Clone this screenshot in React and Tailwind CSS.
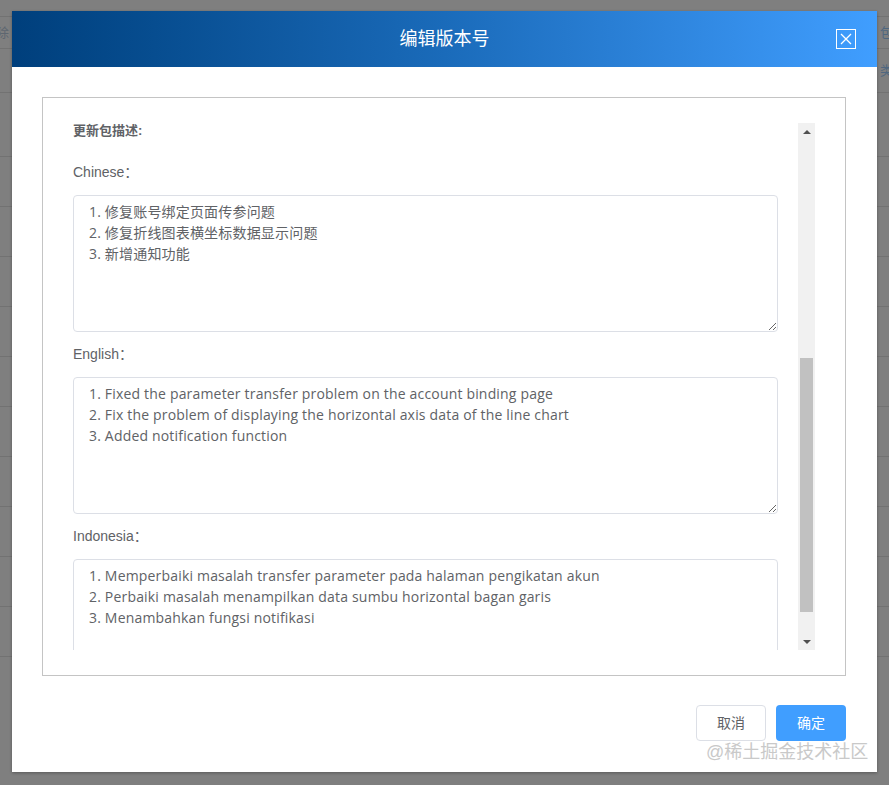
import React from 'react'

const font = { fontFamily: '"Liberation Sans", "Noto Sans CJK SC", sans-serif' }
const areaFont = { fontFamily: '"Open Sans", "Noto Sans CJK SC", sans-serif' }

const zh = '1. 修复账号绑定页面传参问题\n2. 修复折线图表横坐标数据显示问题\n3. 新增通知功能'
const en =
  '1. Fixed the parameter transfer problem on the account binding page\n2. Fix the problem of displaying the horizontal axis data of the line chart\n3. Added notification function'
const id =
  '1. Memperbaiki masalah transfer parameter pada halaman pengikatan akun\n2. Perbaiki masalah menampilkan data sumbu horizontal bagan garis\n3. Menambahkan fungsi notifikasi'

const rowHeights = [17, 32, 44, 64, 50, 50, 50, 50, 50, 50, 50, 50, 50, 50]

function Backdrop() {
  return (
    <div className="flex flex-col">
      {rowHeights.map((h, i) => (
        <div
          key={i}
          style={{ height: h }}
          className="flex items-center justify-between border-b border-[#727272] text-[13px] text-[#5d6670]"
        >
          <span className="-ml-[4px]">{i === 1 ? '除' : ''}</span>
          <span className="-mr-[4px] text-[#4f6780]">{i === 1 ? '包' : i === 2 ? '类' : ''}</span>
        </div>
      ))}
    </div>
  )
}

function Field({ label, value }) {
  return (
    <div>
      <div className="flex h-[45px] items-center text-[14px] text-[#606266]">{label}</div>
      <textarea
        readOnly
        defaultValue={value}
        className="block h-[137px] w-full rounded-[4px] border border-[#dcdfe6] bg-white px-[15px] py-[5px] text-[14px] leading-[21px] tracking-[0.18px] text-[#606266] outline-none"
        style={areaFont}
      />
    </div>
  )
}

function Scrollbar() {
  return (
    <div className="flex w-[17px] shrink-0 flex-col bg-[#f1f1f1]">
      <div className="flex h-[17px] items-center justify-center">
        <div className="h-0 w-0 border-x-[4px] border-b-[4px] border-x-transparent border-b-[#505050]" />
      </div>
      <div className="flex flex-1 flex-col px-[2px]">
        <div className="h-[218px]" />
        <div className="h-[254px] bg-[#c1c1c1]" />
      </div>
      <div className="flex h-[17px] items-center justify-center">
        <div className="h-0 w-0 border-x-[4px] border-t-[4px] border-x-transparent border-t-[#505050]" />
      </div>
    </div>
  )
}

export default function App() {
  return (
    <div className="relative h-[785px] w-[889px] overflow-hidden bg-[#7f7f7f]" style={font}>
      <Backdrop />

      <div className="absolute left-[12px] top-[11px] flex h-[761px] w-[865px] flex-col bg-white shadow-[0_1px_3px_rgba(0,0,0,0.3)]">
        <div className="relative flex h-[56px] shrink-0 items-center justify-center bg-gradient-to-r from-[#003f7c] via-[#1a6bba] to-[#409eff]">
          <span className="text-[18px] text-white">编辑版本号</span>
          <button className="absolute right-[21px] top-[18px] flex h-[20px] w-[20px] items-center justify-center border border-white">
            <svg width="12" height="12" viewBox="0 0 12 12" fill="none" stroke="white" strokeWidth="1.3">
              <path d="M1 1 L11 11 M11 1 L1 11" />
            </svg>
          </button>
        </div>

        <div className="flex flex-1 flex-col px-[30px] pt-[30px] pr-[31px]">
          <div className="flex h-[579px] flex-col border border-[#c4c4c4] pb-[25px] pl-[30px] pr-[30px] pt-[25px]">
            <div className="flex min-h-0 flex-1">
              <div className="min-w-0 flex-1 overflow-hidden pr-[20px]">
                <div className="h-[16px] text-[13px] font-bold leading-[16px] text-[#606266]">更新包描述:</div>
                <div className="h-[11px]" />
                <Field label="Chinese：" value={zh} />
                <Field label="English：" value={en} />
                <Field label="Indonesia：" value={id} />
              </div>
              <Scrollbar />
            </div>
          </div>

          <div className="flex justify-end gap-[10px] pt-[29px]">
            <button className="h-[36px] w-[70px] rounded-[4px] border border-[#dcdfe6] bg-white text-[14px] text-[#606266]">
              取消
            </button>
            <button className="h-[36px] w-[70px] rounded-[4px] bg-[#409eff] text-[14px] text-white">确定</button>
          </div>
        </div>
      </div>

      <div className="absolute left-[706px] top-[740px] text-[18px] leading-[24px] text-[#c9c9c9] [text-shadow:0_0_1px_rgba(255,255,255,0.6)]">
        @稀土掘金技术社区
      </div>
    </div>
  )
}
